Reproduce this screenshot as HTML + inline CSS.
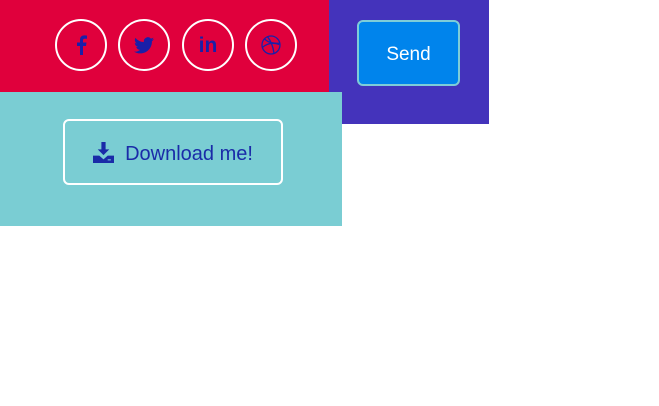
<!DOCTYPE html>
<html><head><style>
body{margin:0;width:659px;height:406px;background:#fff;position:relative;overflow:hidden;font-family:"Liberation Sans",sans-serif}
.a{position:absolute}
.c{position:absolute;top:19px;width:48px;height:48px;border:2px solid #fff;border-radius:50%;display:flex;align-items:center;justify-content:center;color:#1a1fa8;box-sizing:content-box}
</style></head><body>
<div class="a" style="left:0;top:0;width:329px;height:92px;background:#e0003c"></div>
<div class="a" style="left:329px;top:0;width:160px;height:124px;background:#4433bb"></div>
<div class="a" style="left:0;top:92px;width:342px;height:134px;background:#7acdd3"></div>
<div class="c" style="left:55px;top:19px;width:48px;height:48px"><svg width="12" height="20" viewBox="0 0 12 20"><path d="M8 20V11h3l.5-3.5H8V5.5c0-1 .3-1.7 1.8-1.7H12V.6C11.5.5 10.4.4 9.3.4 6.8.4 5 1.9 5 4.8v2.7H2V11h3v9z" fill="#1a1fa8"/></svg></div>
<div class="c" style="left:118px;width:48px;height:48px"><svg width="20" height="17" viewBox="0 0 24 20"><path d="M24 2.4c-.9.4-1.8.6-2.8.8 1-.6 1.8-1.6 2.2-2.7-1 .6-2 1-3.1 1.2A4.9 4.9 0 0 0 11.9 6 14 14 0 0 1 1.7.9a4.9 4.9 0 0 0 1.5 6.6c-.8 0-1.6-.3-2.2-.6 0 2.4 1.700 4.4 3.9 4.800-.7.2-1.5.2-2.2.1.6 2 2.4 3.4 4.6 3.4A9.9 9.9 0 0 1 0 17.3 14 14 0 0 0 7.5 19.5c9.1 0 14-7.5 14-14v-.6c1-.7 1.8-1.600 2.5-2.5z" fill="#1a1fa8"/></svg></div>
<div class="c" style="left:182px;width:48px;height:48px;font-weight:bold;font-size:21px;color:#1a1fa8"><span style="position:relative;top:1px">in</span></div>
<div class="c" style="left:245px;width:48px;height:48px"><svg width="20" height="20" viewBox="0 0 20 20" fill="none" stroke="#1a1fa8" stroke-width="1.3"><circle cx="10" cy="10" r="9"/><path d="M3.5 3.8c3 3.5 9 5 15.3 4.3M6.5 1.7c3 3.8 5.5 9 6.5 16.7M1.3 12.5c4-3.5 10-5.5 17-3"/></svg></div>
<div class="a" style="left:357px;top:20px;width:99px;height:62px;border:2px solid #7ecdd8;border-radius:6px;background:#0084ec;color:#fff;font-size:19px;display:flex;align-items:center;justify-content:center"><span style="position:relative;top:2px">Send</span></div>
<div class="a" style="left:63px;top:119px;width:216px;height:62px;border:2px solid #fff;border-radius:6px;color:#1a2ba8;font-size:20px;display:flex;align-items:center;justify-content:center"><svg width="21" height="21" viewBox="0 0 20 20" style="margin-right:11px"><path d="M8 0h4v7h3.5L10 12.5 4.5 7H8z" fill="#1a2ba8"/><path d="M0 13h6l4 3.5 4-3.5h6v7H0z" fill="#1a2ba8"/><rect x="14" y="16.5" width="3" height="1" fill="#7acdd3"/></svg><span style="position:relative;top:2px">Download me!</span></div>
</body></html>
